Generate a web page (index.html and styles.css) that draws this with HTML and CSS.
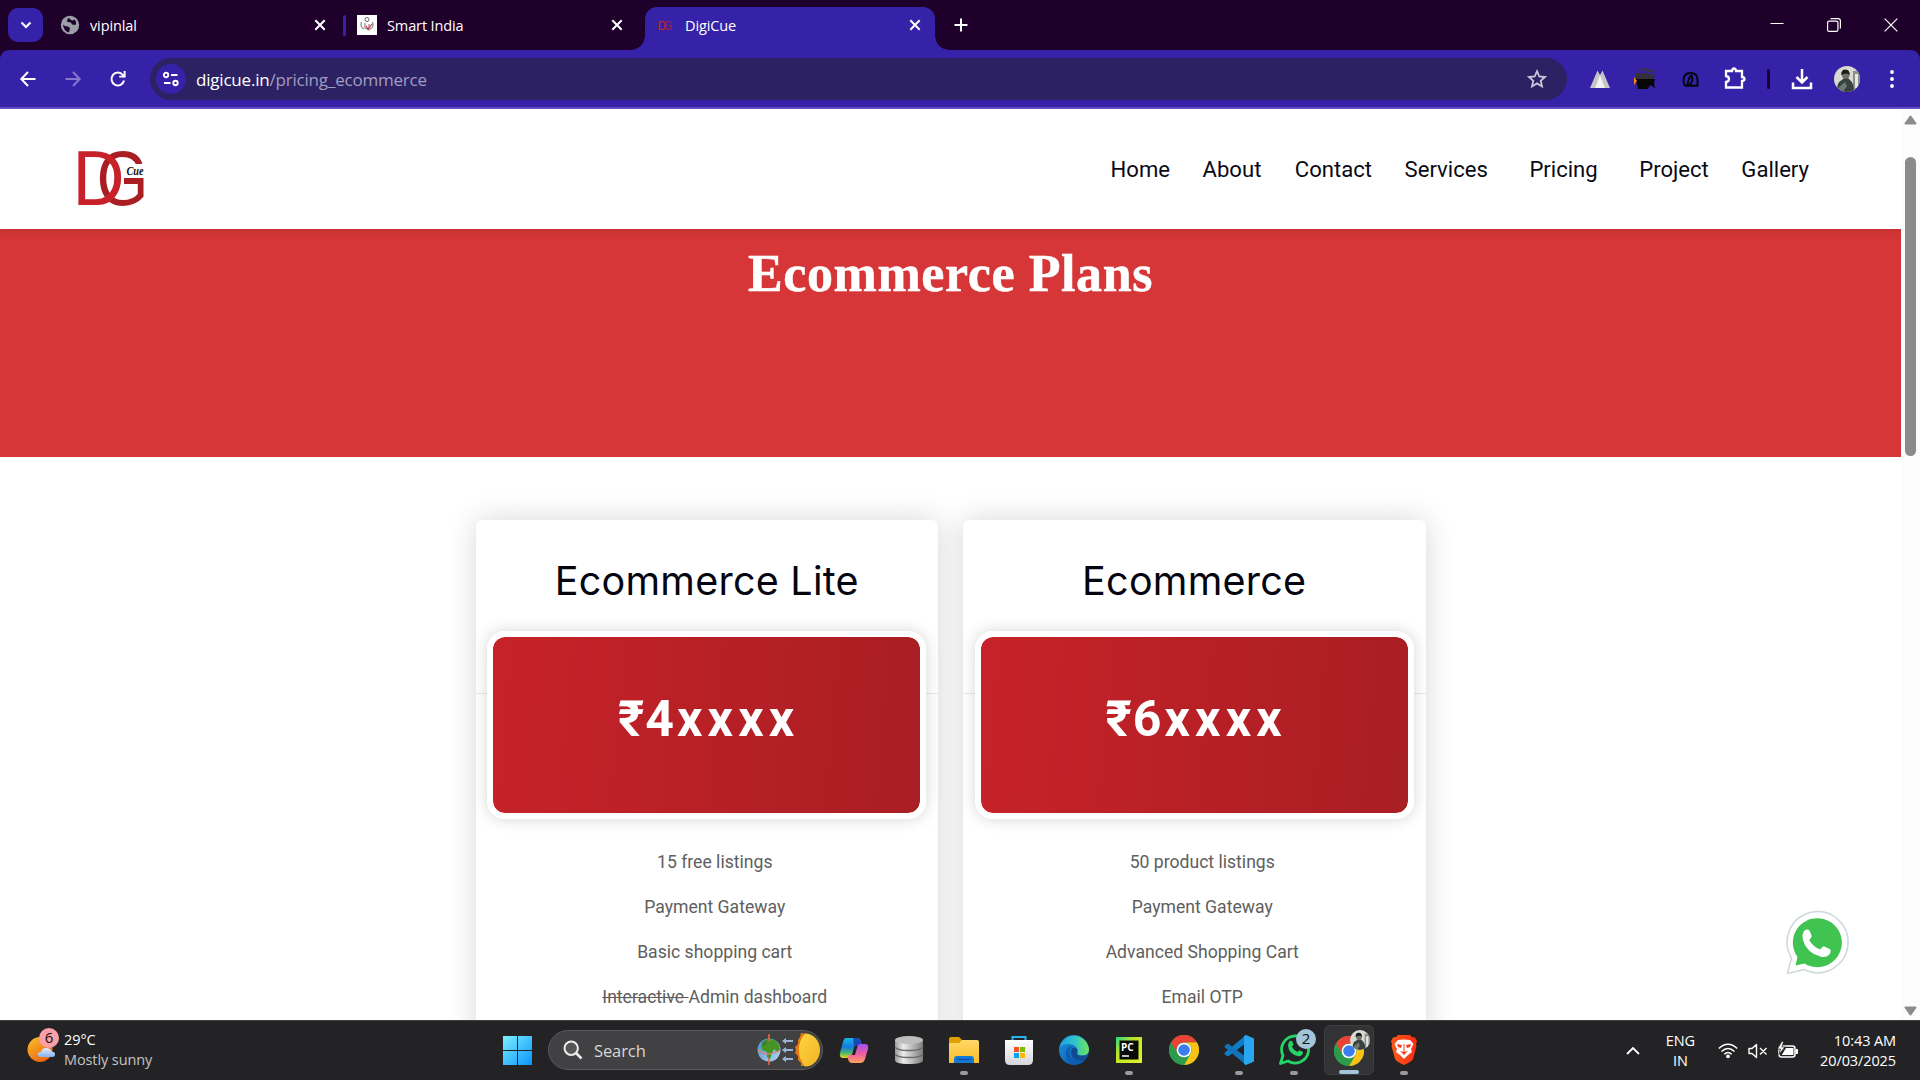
FILE: index.html
```html
<!DOCTYPE html>
<html lang="en">
<head>
<meta charset="utf-8">
<title>DigiCue</title>
<link rel="stylesheet" href="styles.css">
</head>
<body>
<svg class="defs" width="0" height="0" aria-hidden="true">
  <defs>
    <linearGradient id="win" x1="0" y1="0" x2="1" y2="1"><stop offset="0" stop-color="#7df0ff"/><stop offset="1" stop-color="#0a93fa"/></linearGradient>
    <linearGradient id="sun" x1="0" y1="0" x2=".6" y2="1"><stop offset="0" stop-color="#f6c12e"/><stop offset="1" stop-color="#f0660c"/></linearGradient>
    <linearGradient id="cloud" x1="0" y1="0" x2="0" y2="1"><stop offset="0" stop-color="#e2edfc"/><stop offset="1" stop-color="#88b2f0"/></linearGradient>
    <linearGradient id="gold" x1="0" y1="0" x2="1" y2="1"><stop offset="0" stop-color="#ffd640"/><stop offset="1" stop-color="#f0b323"/></linearGradient>
    <linearGradient id="earth" x1="0" y1="0" x2="1" y2="1"><stop offset="0" stop-color="#3f8fc4"/><stop offset="1" stop-color="#b6d8f7"/></linearGradient>
    <linearGradient id="copA" x1="0" y1="0" x2="0" y2="1"><stop offset="0" stop-color="#17b5e8"/><stop offset=".45" stop-color="#1678de"/><stop offset=".75" stop-color="#49b86c"/><stop offset="1" stop-color="#f4d21a"/></linearGradient>
    <linearGradient id="copB" x1="0" y1="0" x2="0" y2="1"><stop offset="0" stop-color="#a14ff0"/><stop offset=".5" stop-color="#ec5ba3"/><stop offset="1" stop-color="#ffa05c"/></linearGradient>
    <linearGradient id="metal"><stop offset="0" stop-color="#9a9a9a"/><stop offset=".3" stop-color="#ececec"/><stop offset="1" stop-color="#7d7d7d"/></linearGradient>
    <linearGradient id="folder" x1="0" y1="0" x2="0" y2="1"><stop offset="0" stop-color="#ffd868"/><stop offset="1" stop-color="#fbbd27"/></linearGradient>
    <linearGradient id="bag" x1="0" y1="0" x2="0" y2="1"><stop offset="0" stop-color="#ffffff"/><stop offset="1" stop-color="#d4d6da"/></linearGradient>
    <linearGradient id="edgeT"><stop offset="0" stop-color="#1c9fe0"/><stop offset=".5" stop-color="#2fc3cf"/><stop offset="1" stop-color="#6ee455"/></linearGradient>
    <linearGradient id="edgeB" x1="0" y1="0" x2="1" y2="1"><stop offset="0" stop-color="#1c93e0"/><stop offset="1" stop-color="#0c4ea3"/></linearGradient>
    <linearGradient id="pyc" x1="0" y1="0" x2="1" y2="1"><stop offset="0" stop-color="#21d789"/><stop offset=".35" stop-color="#b9e42b"/><stop offset="1" stop-color="#e6f32a"/></linearGradient>
    <linearGradient id="brave"><stop offset="0" stop-color="#ff5a1c"/><stop offset="1" stop-color="#fb2b12"/></linearGradient>
    <symbol id="x" viewBox="0 0 12 12"><path d="M1.3 1.3 10.7 10.7M10.7 1.3 1.3 10.7" stroke="#fff" stroke-width="2" fill="none"/></symbol>
    <symbol id="chrome" viewBox="0 0 30 30">
      <circle cx="15" cy="15" r="15" fill="#34a853"/>
      <path d="M2 7.5A15 15 0 0 1 28 7.5H15A7.5 7.5 0 0 0 8.5 18.75Z" fill="#ea4335"/>
      <path d="M28 7.5A15 15 0 0 1 15 30L21.5 18.75A7.5 7.5 0 0 0 15 7.5Z" fill="#fbc116"/>
      <path d="M2 7.5A15 15 0 0 0 15 30L21.5 18.75A7.5 7.5 0 0 1 8.5 18.75Z" fill="#2d9c4a"/>
      <circle cx="15" cy="15" r="7.3" fill="#fff"/><circle cx="15" cy="15" r="5.8" fill="#3b7ded"/>
    </symbol>
    <symbol id="person" viewBox="0 0 26 26">
      <clipPath id="pc"><circle cx="13" cy="13" r="13"/></clipPath>
      <g clip-path="url(#pc)"><path d="M0 0h26v26H0z" fill="#d9dad2"/><path d="M19 5h7v18h-7z" fill="#8b8d88"/><path d="M21 8h3v14h-3z" fill="#e6e7e0"/><path d="M3 26Q3 15 8 14L10 12H14L17 15Q20 18 20 26Z" fill="#38423f"/><path d="M4 22 11 16 13 20 9 26H4Z" fill="#6d7773"/><circle cx="11.7" cy="9" r="3.8" fill="#72706b"/><path d="M7.2 9Q7 3.5 11.5 3.500 16 3.800 15.600 9 13 6 7.200 9Z" fill="#181c1c"/></g>
    </symbol>
  </defs>
</svg>

<header class="tabstrip">
  <div class="tab-search"><svg width="12" height="8" viewBox="0 0 12 8"><path d="M1.500 1.500 6 6 10.500 1.500" fill="none" stroke="#fff" stroke-width="2.200"/></svg></div>
  <div class="tab tab-first">
    <svg width="20" height="20" viewBox="0 0 20 20"><circle cx="10" cy="10" r="9.200" fill="#9aa0a6"/><path d="M3 9.500Q5 12 8 11.500L10 13 9 17.500Q3.500 16 3 9.500ZM9 3Q6 4.500 7.500 7L11 7.500 12 9.500 15.500 10Q17 7 14.500 4.500Q13 6 11 5Z" fill="#1f002b"/></svg>
    <span class="tab-title">vipinlal</span><svg class="close" width="12" height="12"><use href="#x"/></svg>
  </div>
  <div class="tab-sep"></div>
  <div class="tab tab-second">
    <svg width="20" height="20" viewBox="0 0 20 20"><path d="M0 0h20v20H0z" fill="#fff"/><circle cx="10" cy="4.500" r="2" fill="none" stroke="#666" stroke-width="1"/><path d="M4.500 7Q2.500 12 7 14M15.500 7Q17.500 12 13 14M8 8v5l4 2V9" fill="none" stroke="#888" stroke-width="1.200"/><path d="M9 11l2 3 4-5" stroke="#d33" stroke-width="1.200" fill="none"/></svg>
    <span class="tab-title">Smart India</span><svg class="close" width="12" height="12"><use href="#x"/></svg>
  </div>
  <div class="tab tab-active">
    <svg width="14" height="14" viewBox="0 0 14 14"><text x="-.5" y="12" class="fav" fill="#c72229" textLength="9" lengthAdjust="spacingAndGlyphs">D</text><text x="5" y="12" class="fav" fill="#a81e32" textLength="9" lengthAdjust="spacingAndGlyphs">G</text></svg>
    <span class="tab-title">DigiCue</span><svg class="close" width="12" height="12"><use href="#x"/></svg>
  </div>
  <svg class="new-tab" width="14" height="14" viewBox="0 0 14 14"><path d="M7 .5v13M.5 7h13" stroke="#fff" stroke-width="2"/></svg>
  <div class="window-buttons">
    <svg width="14" height="14" viewBox="0 0 14 14"><path d="M.5 5.500h13" stroke="#fff" stroke-width="1"/></svg>
    <svg width="14" height="14" viewBox="0 0 14 14"><rect x=".6" y="3.100" width="10.300" height="10.300" rx="1.500" fill="none" stroke="#fff" stroke-width="1.200"/><path d="M3.500 1Q4 .6 5 .6h6q2.400 0 2.400 2.400v6q0 1-.5 1.500" fill="none" stroke="#fff" stroke-width="1.200"/></svg>
    <svg width="14" height="14" viewBox="0 0 14 14"><path d="M.7.7l12.600 12.600M13.300.7.7 13.300" stroke="#fff" stroke-width="1.200"/></svg>
  </div>
</header>

<div class="toolbar-back"><div class="toolbar">
  <div class="nav-buttons">
    <svg width="16" height="16" viewBox="0 0 16 16"><path d="M15.500 8H2M8 1 1.300 8 8 15" fill="none" stroke="#fff" stroke-width="2"/></svg>
    <svg width="16" height="16" viewBox="0 0 16 16"><path d="M.5 8H14M8 1l6.700 7L8 15" fill="none" stroke="#8678cf" stroke-width="2"/></svg>
    <svg width="16" height="16" viewBox="0 0 16 16"><path d="M14 9.500A6.300 6.500 0 1 1 12.800 4L14.500 5.700" fill="none" stroke="#fff" stroke-width="2"/><path d="M15.600 0v6.600H9.200V4.700h4.400V0z" fill="#fff"/></svg>
  </div>
  <div class="omnibox">
    <div class="site-info"><svg width="18" height="16" viewBox="0 0 18 16"><g fill="none" stroke="#fff" stroke-width="1.900"><circle cx="4" cy="4" r="2.200"/><path d="M9 4h6.500M2 12h6.500"/><circle cx="13.500" cy="12" r="2.200"/></g></svg></div>
    <span class="url"><b>digicue.in</b>/pricing_ecommerce</span>
    <svg class="star" width="20" height="20" viewBox="0 0 20 20"><path d="M10 2.200 12.300 7.500 18 8 13.700 11.800 15 17.400 10 14.400 5 17.400 6.300 11.800 2 8 7.700 7.500Z" fill="none" stroke="#c9c5d8" stroke-width="1.800"/></svg>
  </div>
  <div class="extensions">
    <svg width="22" height="22" viewBox="0 0 22 22"><path d="M1 20 8.500 2.500 11 7 13.500 2.500 21 20Z" fill="#c4c4c4"/><path d="M6 20 11 7l5 13Z" fill="#f2f2f2"/></svg>
    <svg width="22" height="22" viewBox="0 0 22 22"><path d="M2 5h13l2 2 4-2-2 7H2Z" fill="#343039"/><path d="M0 11h19l2 0-1 4 1 5-5-3-2 4H4l-1-5Z" fill="#070707"/><path d="M0 9l3 4-3 4Z" fill="#f08a19"/><path d="M6 3q3-3 7-1t7 0" fill="none" stroke="#3b3437" stroke-width="2"/></svg>
    <svg width="17" height="18" viewBox="0 0 17 18"><path d="M5.500 15.700H3.500Q1.500 14.500 1.500 10 1.800 3 8.500 3 15.500 3 15.500 9.500v6.200H7Q12 11 9.500 5.500 7 6 5.500 15" fill="none" stroke="#04040c" stroke-width="2"/></svg>
    <svg width="22" height="24" viewBox="0 0 22 24"><path d="M2 4h6q.3-2.500 2-2.500t2 2.500h6v6q2.500.3 2.500 2t-2.500 2v6.500H2V15q3-.5 3-3T2 9Z" fill="none" stroke="#fff" stroke-width="2.300"/></svg>
    <i class="divider"></i>
    <svg width="22" height="22" viewBox="0 0 22 22"><path d="M11 1v13M5.500 9l5.500 5.500L16.500 9M2 14.500V20h18v-5.500" fill="none" stroke="#fff" stroke-width="2.500"/></svg>
    <svg width="26" height="26"><use href="#person"/></svg>
    <svg width="4" height="20" viewBox="0 0 4 20"><g fill="#fff"><circle cx="2" cy="3" r="1.900"/><circle cx="2" cy="10" r="1.900"/><circle cx="2" cy="17" r="1.900"/></g></svg>
  </div>
</div></div>

<div class="viewport">
  <main class="page">
    <div class="site-header">
      <svg class="logo" width="68" height="58" viewBox="0 0 68 58" role="img">
        <text class="logo-letter" x="18.500" y="55" fill="#a81e22" textLength="52" lengthAdjust="spacingAndGlyphs">G</text>
        <text class="logo-letter" x="-5.500" y="55" fill="#c72229" textLength="52" lengthAdjust="spacingAndGlyphs">D</text>
        <path d="M48 14h20v14H48z" fill="#fff"/><text class="logo-cue" x="48.500" y="25" textLength="17" lengthAdjust="spacingAndGlyphs">Cue</text>
      </svg>
      <nav class="menu"><a>Home</a><a class="about">About</a><a>Contact</a><a>Services</a><a class="wide">Pricing</a><a>Project</a><a>Gallery</a></nav>
    </div>
    <section class="banner"><h1>Ecommerce Plans</h1></section>
    <section class="plans">
      <article class="plan">
        <h2>Ecommerce Lite</h2>
        <div class="price-row"><div class="price"><span class="rupee">₹</span><span class="digit">4</span>xxxx</div></div>
        <ul><li>15 free listings</li><li>Payment Gateway</li><li>Basic shopping cart</li><li><s>Interactive </s>Admin dashboard</li></ul>
      </article>
      <article class="plan">
        <h2>Ecommerce</h2>
        <div class="price-row"><div class="price"><span class="rupee">₹</span><span class="digit">6</span>xxxx</div></div>
        <ul><li>50 product listings</li><li>Payment Gateway</li><li>Advanced Shopping Cart</li><li>Email OTP</li></ul>
      </article>
    </section>
  </main>
  <div class="scrollbar">
    <svg width="13" height="10" viewBox="0 0 13 10"><path d="M6.500 1.500 11.500 8.500H1.500Z" fill="#8b8b8b" stroke="#8b8b8b" stroke-width="2" stroke-linejoin="round"/></svg>
    <div class="thumb"></div>
    <svg class="down" width="13" height="10" viewBox="0 0 13 10"><path d="M6.500 8.500 11.500 1.500H1.500Z" fill="#8b8b8b" stroke="#8b8b8b" stroke-width="2" stroke-linejoin="round"/></svg>
  </div>
  <svg class="chat" width="64" height="64" viewBox="0 0 64 64"><path d="M1.500 62.500 5.500 47A30.500 30.500 0 1 1 18 58.500Z" fill="#fff" stroke="#cfd8dc" stroke-width="1.500" stroke-linejoin="round"/><path d="M9.500 54.500 11.500 46A24.500 24.500 0 1 1 18.500 52.500Z" fill="#40c351"/><path d="M18.500 19.500q2.500-2 5 0l2.200 5.500q0 1.500-2.500 4 3.500 6.500 11 9.500 2-3 3.500-3.300l6 2.800q1.800 1 .3 4.500-3 4.500-9 3.300Q20.500 42 17 29q-1.500-6 1.500-9.500Z" fill="#fff"/></svg>
</div>

<footer class="taskbar">
  <div class="weather">
    <svg width="34" height="38" viewBox="0 0 34 38"><circle cx="13" cy="23.500" r="12.500" fill="url(#sun)"/><path d="M14 31q-4-.5-3.500-3 .5-2 3.500-2 1-4.500 6-4 4 .5 4.500 3.500 4 .5 3.500 3Q28 31 25 31Z" fill="url(#cloud)"/><circle cx="22" cy="12" r="10" fill="#fb9fa6"/><text x="22" y="17" class="badge">6</text></svg>
    <div class="two-line"><span>29°C</span><span class="dim">Mostly sunny</span></div>
  </div>
  <div class="apps">
    <svg class="start" width="29" height="29" viewBox="0 0 29 29"><path d="M0 0h14v14H0zM15 0h14v14H15zM0 15h14v14H0zM15 15h14v14H15z" fill="url(#win)"/></svg>
    <div class="search">
      <svg width="20" height="20" viewBox="0 0 20 20"><circle cx="8.200" cy="8.200" r="6.700" fill="#555" stroke="#eee" stroke-width="2"/><path d="M13 13l5.500 5.500" stroke="#eee" stroke-width="2.500"/></svg>
      <span>Search</span>
      <svg class="equinox" width="64" height="36" viewBox="0 0 64 36"><circle cx="12" cy="18" r="11.500" fill="url(#earth)"/><path d="M8 8q7-3 12 2 3 4 3 8l-3 2-3-3-2 4-2 6-3-2v-5l-5-2-1-4 4-3Z" fill="#459424"/><path d="M5 11q2-3 5-3l-1 5-4 1Z" fill="#3a7d33"/><path d="M1 18q9 8 22 0" fill="none" stroke="#e37c68" stroke-width="1.300"/><path d="M12 2v7M12 26v7" stroke="#e9633b" stroke-width="1.600"/><path d="M25 9l4-3v2h7v2h-7v2zM25 18l4-3v2h7v2h-7v2zM25 27l4-3v2h7v2h-7v2z" fill="#9cb5d6"/><path d="M50 2 44 1l-1 4-2 3v4l-3 3 1 3-1 3 3 3v4l3 3v3h6Z" fill="#e5780e"/><path d="M48 1.500A15 16.500 0 0 1 48 34.500 25 25 0 0 1 48 1.500Z" fill="url(#gold)"/></svg>
    </div>
    <div class="app"><svg width="30" height="30" viewBox="0 0 30 30"><path d="M7 3h11q3 0 4 4l1 3h-5q-2 0-3 4l-2 6q-1 3-5 3H4q-4 0-3-5L4 7q1-4 3-4Z" fill="url(#copA)"/><path d="M14 3h4q3 0 4 4l1 3h-5l-3 1Z" fill="#1b48b9"/><path d="M22 9h4q4 0 3 5l-3 10q-1 4-5 4H13q-3 0-4-4l-.500-3q3 0 4-3h3l2-6q1-3 4.500-3Z" fill="url(#copB)"/><path d="M15.500 11h3L16 20h-3Z" fill="#232326"/></svg></div>
    <div class="app"><svg width="30" height="30" viewBox="0 0 30 30"><path d="M1 5v20q0 4 14 4t14-4V5Z" fill="url(#metal)"/><ellipse cx="15" cy="5" rx="14" ry="4" fill="#bdbdbd"/><path d="M1 12q2 3.500 14 3.500T29 12M1 19q2 3.500 14 3.500T29 19" fill="none" stroke="#6a6a6a" stroke-width="1.500"/></svg></div>
    <div class="app run"><svg width="30" height="30" viewBox="0 0 30 30"><path d="M0 4q0-2 2-2h8l3 3v6H0Z" fill="#e0a100"/><path d="M0 8h10l3-3h15q2 0 2 2v21H0Z" fill="url(#folder)"/><path d="M5 28v-4q0-3 3-3h14q3 0 3 3v4Z" fill="#1478d4"/><path d="M8.500 24.500h13" stroke="#0b4f9a" stroke-width="1.300"/></svg></div>
    <div class="app"><svg width="30" height="30" viewBox="0 0 30 30"><path d="M8.500 6V2h13v4" fill="none" stroke="#28b2ee" stroke-width="2"/><path d="M1 5h28v20q0 5-5 5H6q-5 0-5-5Z" fill="url(#bag)"/><path d="M10 12h5v5h-5z" fill="#f25022"/><path d="M16 12h5v5h-5z" fill="#7fba00"/><path d="M10 18h5v5h-5z" fill="#00a4ef"/><path d="M16 18h5v5h-5z" fill="#ffb900"/></svg></div>
    <div class="app"><svg width="30" height="30" viewBox="0 0 30 30"><circle cx="15" cy="15" r="15" fill="url(#edgeB)"/><path d="M.3 13A15 15 0 0 1 30 14.500Q30 20 24 20.500 18 21 18.500 18 20 12 13 9.500 5 7.500.3 13Z" fill="url(#edgeT)"/><path d="M13 11Q9 16 11 21 15 28 25 25.500 20 31 12 29.500 6 25 7 17 8 11.500 13 11Z" fill="#0d5eb0"/><path d="M18.500 15q0 2-1 3 1 4 11 2l-3 5q-8 2-12-3-3-5 0-9 3-1 5 2Z" fill="#114a91"/><path d="M13.500 14q4-1 5 1.500.3 1.500-.8 3 1 3 8 2.500 3-.5 5-2.500l3 8-8-2q-8 1-11-4-2.500-4-1.200-6.500Z" fill="#232326" clip-path="inset(12px 0 6px 0)"/></svg></div>
    <div class="app run"><svg width="26" height="26" viewBox="0 0 26 26"><path d="M0 0h26v26H0z" fill="url(#pyc)"/><path d="M3.500 3.500h19v19h-19z" fill="#070a06"/><text x="5" y="13.500" class="pc">PC</text><path d="M6 19h7" stroke="#fff" stroke-width="1.500"/></svg></div>
    <div class="app"><svg width="30" height="30"><use href="#chrome"/></svg></div>
    <div class="app run"><svg width="30" height="30" viewBox="0 0 30 30"><path d="M22 0v8L4 21.500 1 19.500q-1-1 0-2Z" fill="#0d7fc9"/><path d="M22 30v-8L4 8.500 1 10.500q-1 1 0 2Z" fill="#1372b8"/><path d="M22 0l8 3.500v23L22 30l-2-1V1Z" fill="#2aa6f0"/></svg></div>
    <div class="app run"><svg class="badged" width="36" height="38" viewBox="0 0 36 38"><path d="M1.500 34.500 4 26.500A13.500 13.500 0 1 1 9 32Z" fill="none" stroke="#25d366" stroke-width="2.800" stroke-linejoin="round"/><path d="M10 13q2-2.500 3.500 0l1 2.700-1.500 2q2 4 5.500 5.300l2-1.800 3.500 1.800q0 4-4.500 4.300Q9 25 9 16Z" fill="#25d366"/><circle cx="27" cy="10" r="10" fill="#a3c5d9"/><text x="27" y="15" class="badge">2</text></svg></div>
    <div class="app run current"><svg class="badged" width="36" height="36" viewBox="0 0 36 36"><use href="#chrome" x="0" y="6" width="30" height="30"/><use href="#person" x="16" y="0" width="20" height="20"/></svg></div>
    <div class="app run"><svg width="26" height="30" viewBox="0 0 26 30"><path d="M7 0h12l2.500 2.500 2-.5L26 6l-1 3 .5 2-3.500 13q-1 2.500-9 6-8-3.500-9-6L.5 11 1 9 0 6l2.500-4 2 .5Z" fill="url(#brave)"/><path d="M7 5l6-.5L19 5l3.500 4-2.500 5 1 3-4 3-4 4-4-4-4-3 1-3L3.500 9Z" fill="#fff"/><path d="M6 9l5 1-1 3-3-1ZM20 9l-5 1 1 3 3-1ZM9 16l4 1 4-1-4 4Z" fill="#fc3c16"/><path d="M13 9v8" stroke="#fc3c16" stroke-width="1"/></svg></div>
  </div>
  <div class="tray">
    <svg class="more" width="14" height="8" viewBox="0 0 14 8"><path d="M1 7l6-6 6 6" fill="none" stroke="#fff" stroke-width="1.800"/></svg>
    <div class="two-line lang"><span>ENG</span><span>IN</span></div>
    <svg class="wifi" width="20" height="16" viewBox="0 0 20 16"><g fill="none" stroke="#fff" stroke-width="1.500"><path d="M.8 5.500Q10-3 19.200 5.500"/><path d="M3.500 8.500q6.500-6 13 0"/><path d="M6.300 11.300q3.700-3.600 7.400 0"/></g><circle cx="10" cy="13.300" r="1.900" fill="#fff"/></svg>
    <svg class="speaker" width="20" height="16" viewBox="0 0 20 16"><path d="M1 5.500h3L8.500 1.500v13L4 10.500H1ZM12 5l6.500 6.500M18.500 5 12 11.500" fill="none" stroke="#fff" stroke-width="1.400" stroke-linejoin="round"/></svg>
    <svg class="battery" width="22" height="18" viewBox="0 0 22 18"><rect x="2" y="4" width="16" height="11" rx="2.500" fill="none" stroke="#fff" stroke-width="1.500"/><path d="M5 12.500 9 6h7.500v7H5Z" fill="#fff"/><path d="M19 7.500h1.500v4H19z" fill="#fff" stroke="#fff"/><path d="M5-1 .5 7h3L2 12.500 8 5H4.800L6.500 0Z" fill="#fff" stroke="#232323" stroke-width=".7"/></svg>
    <div class="two-line clock"><span>10:43 AM</span><span>20/03/2025</span></div>
  </div>
</footer>
</body>
</html>
```
FILE: styles.css
```css
* { box-sizing: border-box; }
body {
  margin: 0; width: 1920px; height: 1080px; overflow: hidden;
  display: flex; flex-direction: column;
  font-family: "Open Sans", "Noto Sans", sans-serif; background: #fff;
}
svg { display: block; flex: none; overflow: visible; }
.defs { position: absolute; }

/* tab strip */
.tabstrip { height: 50px; flex: none; display: flex; align-items: center; background: #1f002b; color: #fff; padding-left: 8px; }
.tab-search { width: 35px; height: 34px; border-radius: 10px; background: #3622a8; display: grid; place-items: center; margin-right: 7px; }
.tab { height: 43px; display: flex; align-items: center; margin-top: 7px; font-size: 14.5px; letter-spacing: -.12px; }
.tab-first { width: 293px; padding: 0 17px 7px 10px; }
.tab-second { width: 299px; padding: 0 22px 7px 11px; }
.tab-title { margin-left: 10px; }
.close { margin-left: auto; }
.tab-sep { width: 3px; height: 21px; border-radius: 2px; background: #3622a8; }
.tab-active { position: relative; width: 290px; padding: 0 14px 7px 13px; background: #3622a8; border-radius: 12px 12px 0 0; }
.tab-active .tab-title { margin-left: 13px; }
.tab-active::before, .tab-active::after { content: ""; position: absolute; bottom: 0; width: 14px; height: 14px; }
.tab-active::before { left: -14px; background: radial-gradient(circle at 0 0, transparent 13.5px, #3622a8 14px); }
.tab-active::after { right: -14px; background: radial-gradient(circle at 100% 0, transparent 13.5px, #3622a8 14px); }
.fav { font: 13px "Liberation Sans", sans-serif; }
.new-tab { margin-left: 19px; }
.window-buttons { margin-left: auto; display: flex; gap: 43px; padding-right: 22px; }

/* toolbar */
.toolbar-back { background: #1f002b; flex: none; }
.toolbar { height: 59px; background: #3622a8; border-radius: 9px 9px 0 0; border-bottom: 2px solid #6350c0; display: flex; align-items: center; }
.nav-buttons { display: flex; gap: 29px; padding-left: 20px; width: 150px; }
.omnibox { width: 1417px; height: 42px; border-radius: 21px; background: #2c2263; display: flex; align-items: center; padding: 0 20px 0 6px; margin-top: 1px; }
.site-info { width: 30px; height: 30px; border-radius: 50%; background: #3622a8; display: grid; place-items: center; }
.url { margin-left: 10px; padding-top: 1px; font-size: 17px; letter-spacing: -.2px; color: #a29cc0; }
.url b { font-weight: 400; color: #fff; }
.star { margin-left: auto; }
.extensions { display: grid; grid-template-columns: repeat(4, 45px) 22px repeat(3, 45px); place-items: center; margin-left: 10.5px; }
.divider { width: 3px; height: 20px; border-radius: 2px; background: #1f002b; }

/* web page */
.viewport { position: relative; height: 911px; flex: none; display: flex; overflow: hidden; }
.page { width: 1901px; overflow: hidden; }
.site-header { position: relative; z-index: 1; height: 120px; background: #fff; box-shadow: 0 0 12px rgba(0, 0, 0, .16); display: flex; justify-content: space-between; align-items: flex-start; padding: 41px 92px 0 78px; }
.logo-letter { font: 77px "Liberation Sans", sans-serif; }
.logo-cue { font: italic bold 13px "Liberation Serif", serif; fill: #111; }
.menu { display: flex; gap: 32.5px; font: 22.1px/34px Roboto, sans-serif; color: #0a0a14; margin-top: 2px; }
.menu .about { margin-right: 1px; }
.menu .wide { margin: 0 9px; }
.banner { height: 228px; background: #d63638; padding-top: 14px; }
.banner h1 { margin: 0; text-align: center; color: #fff; font: bold 52px/62px "Liberation Serif", serif; letter-spacing: .6px; -webkit-text-stroke: .5px #fff; }
.plans { display: flex; justify-content: center; gap: 25px; padding-top: 63px; }
.plan { width: 462.5px; height: 700px; background: #fff; border-radius: 6px; box-shadow: 0 0 30px rgba(0, 0, 0, .16); }
.plan h2 { margin: 0; padding-top: 31px; height: 111px; text-align: center; font: 39.5px/60px Inter, sans-serif; letter-spacing: .25px; color: #05050f; }
.price-row { display: flex; justify-content: center; background: linear-gradient(#e9e9e9, #e9e9e9) 0 62px / 100% 1px no-repeat; }
.price { width: 439px; height: 188px; padding-left: 4px; border: 6px solid #fff; border-radius: 18px; background: linear-gradient(95deg, #c72229, #a81e22) padding-box; box-shadow: 0 0 15px rgba(0, 0, 0, .17); color: #fff; text-align: center; font: bold 50px/165px Roboto, sans-serif; letter-spacing: 5.2px; }
.rupee { letter-spacing: 1px; }
.digit { letter-spacing: 3px; }
.plan ul { list-style: none; margin: 0; padding: 21px 0 0 16px; text-align: center; font: 17.6px/45px Roboto, sans-serif; color: #5e5e5e; }
.scrollbar { width: 19px; background: #fcfcfc; display: flex; flex-direction: column; align-items: center; padding: 6px 0 4px; }
.thumb { width: 11px; height: 299px; margin-top: 32px; border-radius: 6px; background: #8b8b8b; }
.down { margin-top: auto; }
.chat { position: absolute; left: 1786px; top: 802px; }

/* taskbar */
.taskbar { height: 60px; flex: none; background: #232325; border-top: 1px solid #3d3f41; display: flex; color: #fff; font-size: 14.5px; letter-spacing: -.1px; }
.two-line { display: flex; flex-direction: column; line-height: 20px; }
.weather { width: 503px; display: flex; gap: 3px; padding: 5px 0 0 27px; }
.weather .two-line { padding-top: 4px; }
.dim { color: #c4c4c4; }
.badge { font: 15px "Open Sans", sans-serif; text-anchor: middle; fill: #111; }
.apps { display: flex; align-items: center; padding-bottom: 1px; }
.search { width: 275px; height: 40px; margin: 0 3.5px 0 16px; border-radius: 20px; border: 1px solid #5a5a5c; background: #414143; display: flex; align-items: center; padding: 0 1px 0 14px; font-size: 16.5px; color: #d6d6d6; }
.search span { margin-left: 11px; }
.equinox { margin-left: auto; }
.app { position: relative; width: 55px; height: 50px; display: grid; place-items: center; }
.app.run::after { content: ""; position: absolute; left: 23.5px; bottom: 0; width: 8px; height: 4px; border-radius: 2px; background: #9a9a9a; }
.app.current { width: 50px; margin: 0 2.5px; background: #333335; border: 1px solid #3f3f41; border-radius: 6px; }
.app.current::after { left: 14px; width: 20px; background: #a3c5d9; }
.badged { margin: 0 0 5px 6px; }
.pc { font: bold 10px "Open Sans", sans-serif; fill: #fff; }
.tray { margin-left: auto; display: flex; align-items: center; padding-right: 24px; }
.more { margin-right: 26px; }
.lang { align-items: center; margin-right: 23px; }
.speaker { margin-left: 10px; }
.battery { margin-left: 9px; }
.clock { align-items: flex-end; width: 97px; }
```
